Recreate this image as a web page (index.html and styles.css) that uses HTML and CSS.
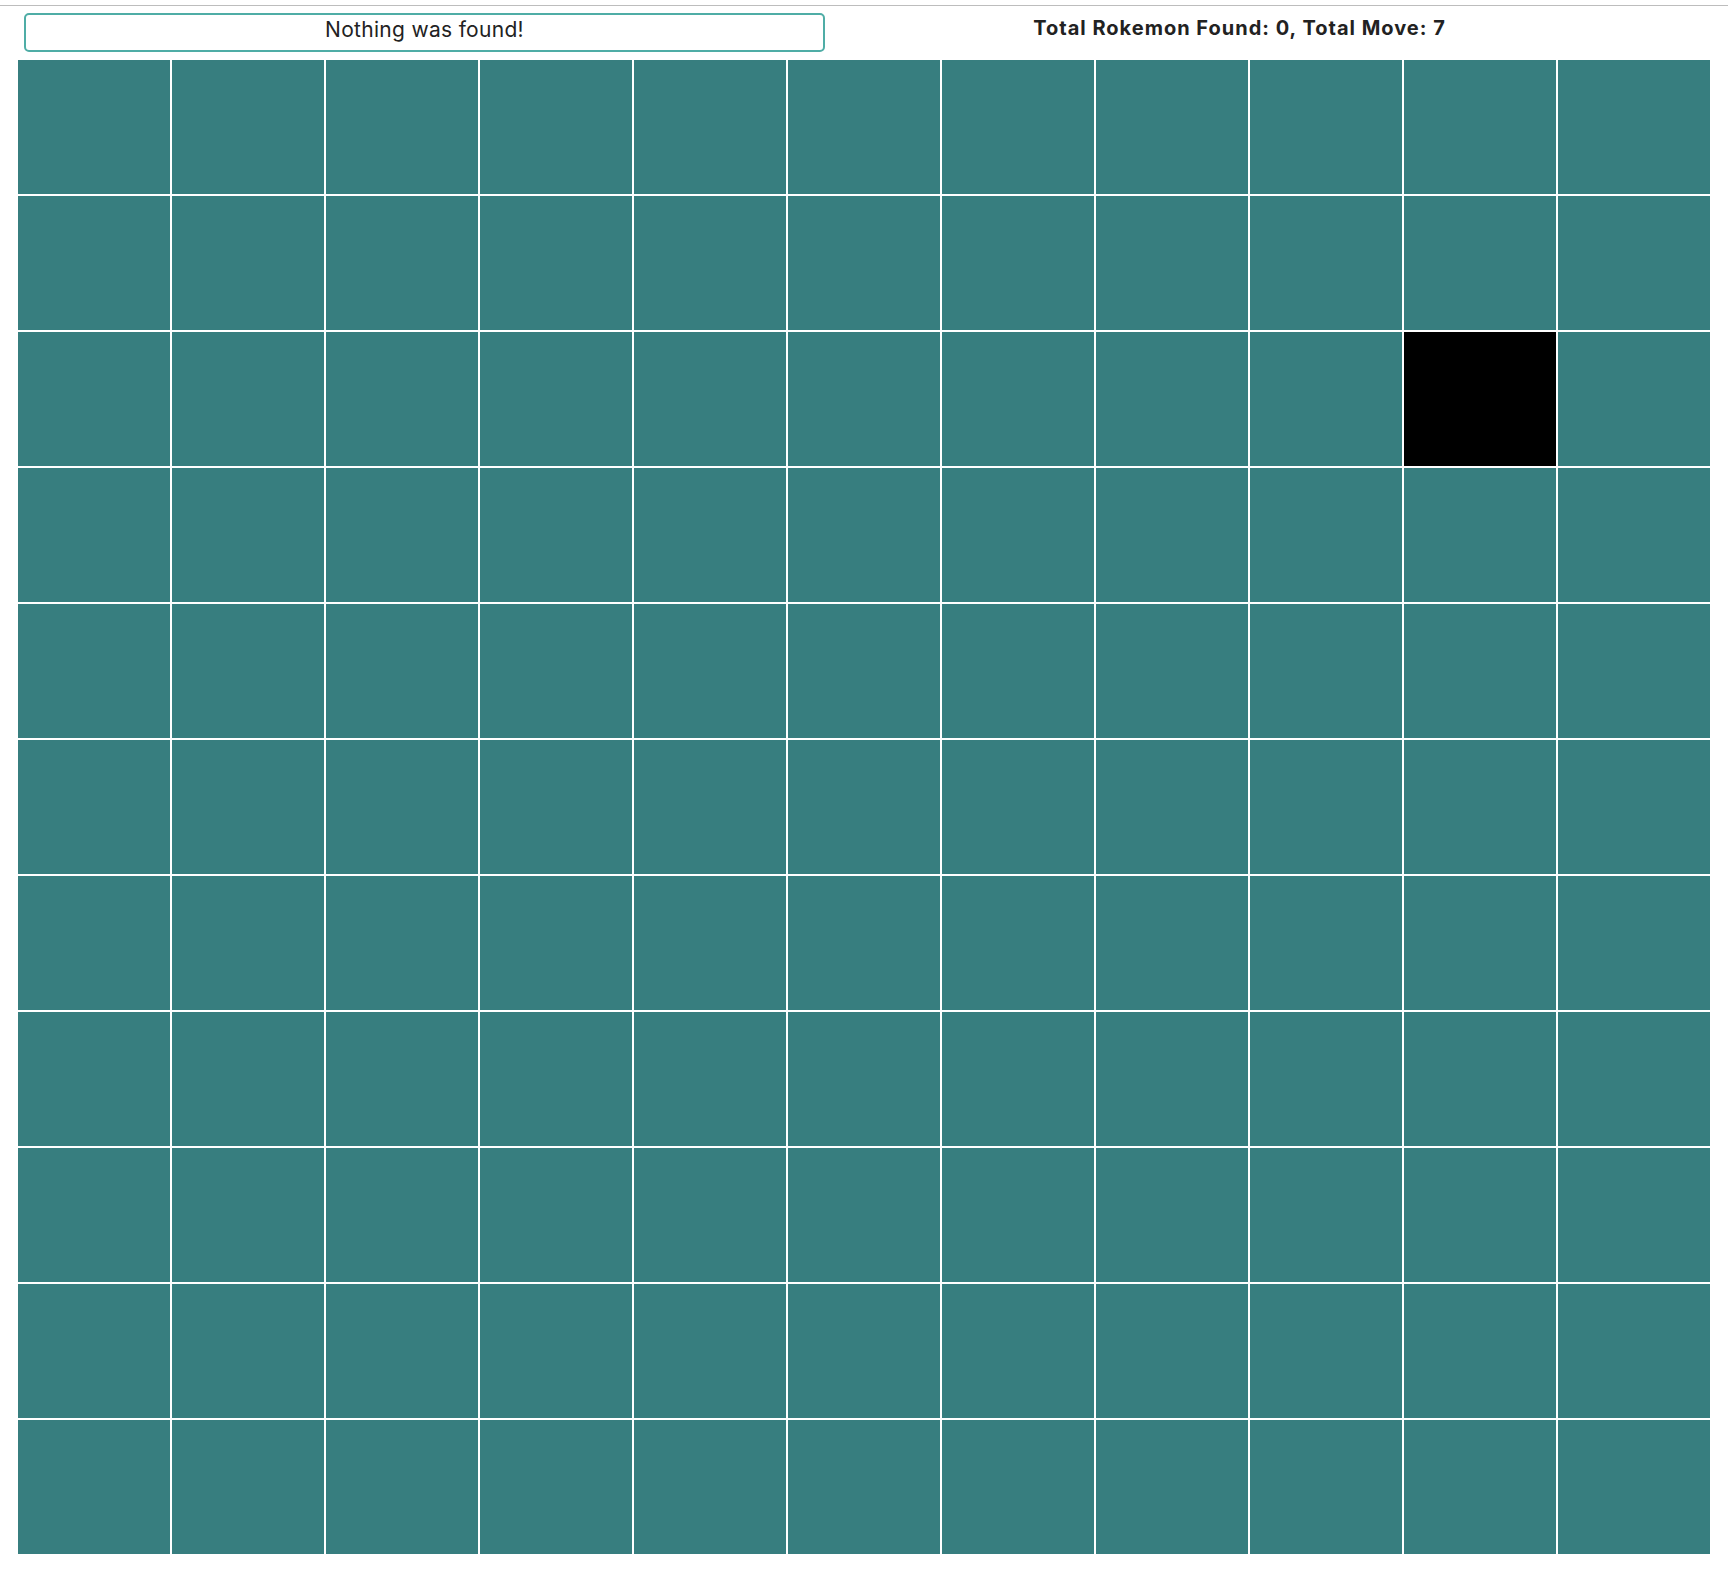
FILE: index.html
```html
<!DOCTYPE html>
<html>
<head>
<meta charset="utf-8">
<link rel="stylesheet" href="styles.css">
</head>
<body>
<div class="topline"></div>
<header class="bar">
  <div class="status">Nothing was found!</div>
  <div class="score">Total Rokemon Found: 0, Total Move: 7</div>
</header>
<main class="grid" id="grid"></main>
<script>
  var g = document.getElementById('grid');
  for (var r = 0; r < 11; r++) {
    for (var c = 0; c < 11; c++) {
      var d = document.createElement('div');
      d.className = (r === 2 && c === 9) ? 'cell cell-active' : 'cell';
      g.appendChild(d);
    }
  }
</script>
</body>
</html>
```
FILE: styles.css
```css
html, body {
  margin: 0;
  padding: 0;
  background: #ffffff;
  font-family: Inter, "Noto Sans", "Liberation Sans", sans-serif;
  color: #222222;
}

.topline {
  margin-top: 5px;
  height: 1px;
  background: #bdbdbd;
}

.bar {
  display: flex;
  align-items: center;
  padding: 6px 0 0 24px;
  height: 40px;
}

.status {
  box-sizing: border-box;
  width: 801px;
  height: 39px;
  border: 2px solid #4fada6;
  border-radius: 5px;
  display: flex;
  align-items: center;
  justify-content: center;
  font-size: 21px;
  letter-spacing: 0.3px;
  padding-bottom: 6px;
}

.score {
  flex: 1;
  text-align: center;
  font-weight: 700;
  font-size: 20px;
  letter-spacing: 1px;
  padding-right: 74px;
  margin-top: -9px;
}

.grid {
  display: grid;
  grid-template-columns: repeat(11, 152px);
  grid-auto-rows: 134px;
  gap: 2px;
  margin: 8px 0 0 18px;
}

.cell {
  background: #377e7f;
}

.cell-active {
  background: #000000;
}
```
